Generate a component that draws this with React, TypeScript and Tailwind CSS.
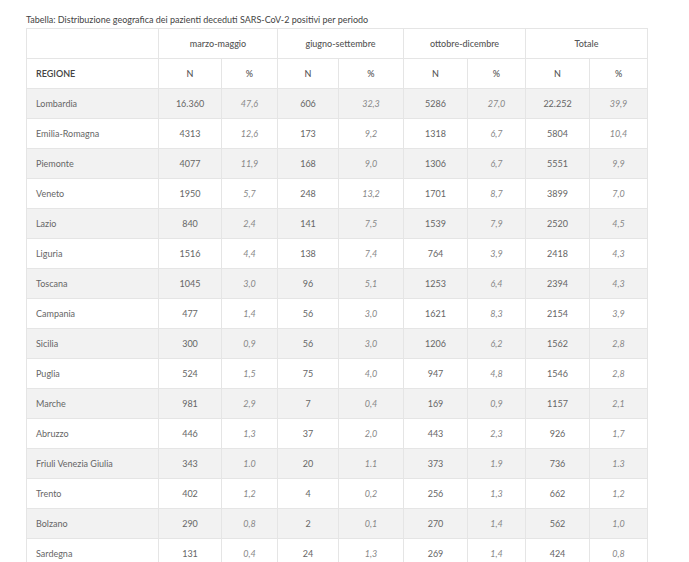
import { Fragment } from "react";

const ROWS: [string, string, string, string, string, string, string, string, string][] = [
  ["Lombardia", "16.360", "47,6", "606", "32,3", "5286", "27,0", "22.252", "39,9"],
  ["Emilia-Romagna", "4313", "12,6", "173", "9,2", "1318", "6,7", "5804", "10,4"],
  ["Piemonte", "4077", "11,9", "168", "9,0", "1306", "6,7", "5551", "9,9"],
  ["Veneto", "1950", "5,7", "248", "13,2", "1701", "8,7", "3899", "7,0"],
  ["Lazio", "840", "2,4", "141", "7,5", "1539", "7,9", "2520", "4,5"],
  ["Liguria", "1516", "4,4", "138", "7,4", "764", "3,9", "2418", "4,3"],
  ["Toscana", "1045", "3,0", "96", "5,1", "1253", "6,4", "2394", "4,3"],
  ["Campania", "477", "1,4", "56", "3,0", "1621", "8,3", "2154", "3,9"],
  ["Sicilia", "300", "0,9", "56", "3,0", "1206", "6,2", "1562", "2,8"],
  ["Puglia", "524", "1,5", "75", "4,0", "947", "4,8", "1546", "2,8"],
  ["Marche", "981", "2,9", "7", "0,4", "169", "0,9", "1157", "2,1"],
  ["Abruzzo", "446", "1,3", "37", "2,0", "443", "2,3", "926", "1,7"],
  ["Friuli Venezia Giulia", "343", "1.0", "20", "1.1", "373", "1.9", "736", "1.3"],
  ["Trento", "402", "1,2", "4", "0,2", "256", "1,3", "662", "1,2"],
  ["Bolzano", "290", "0,8", "2", "0,1", "270", "1,4", "562", "1,0"],
  ["Sardegna", "131", "0,4", "24", "1,3", "269", "1,4", "424", "0,8"],
];

const PERIODS = ["marzo-maggio", "giugno-settembre", "ottobre-dicembre", "Totale"];

export default function App() {
  return (
    <div className="min-h-screen bg-white pl-[26px] pt-[13px] font-['Lato','Open_Sans',sans-serif] text-[#666]">
      <p className="mb-[2px] h-[13px] text-[9px] leading-[13px] text-[#444]">
        Tabella: Distribuzione geografica dei pazienti deceduti SARS-CoV-2 positivi per periodo
      </p>
      <table className="w-[621px] table-fixed border-collapse text-[9px]">
        <colgroup>
          <col className="w-[132px]" />
          <col className="w-[63px]" />
          <col className="w-[56px]" />
          <col className="w-[61px]" />
          <col className="w-[65px]" />
          <col className="w-[64px]" />
          <col className="w-[58px]" />
          <col className="w-[64px]" />
          <col className="w-[58px]" />
        </colgroup>
        <thead>
          <tr className="h-[30px]">
            <th className="border border-[#e5e5e5]" />
            {PERIODS.map((p) => (
              <th key={p} colSpan={2} className="border border-[#e5e5e5] text-center font-medium text-[#555]">
                {p}
              </th>
            ))}
          </tr>
          <tr className="h-[30px]">
            <th className="border border-[#e5e5e5] pl-[9px] text-left font-semibold text-[#444]">REGIONE</th>
            {PERIODS.map((p) => (
              <Fragment key={p}>
                <th className="border border-[#e5e5e5] text-center font-medium text-[#555]">N</th>
                <th className="border border-[#e5e5e5] text-center font-medium text-[#555]">%</th>
              </Fragment>
            ))}
          </tr>
        </thead>
        <tbody>
          {ROWS.map((r, i) => (
            <tr key={r[0]} className={`h-[30px] ${i % 2 === 0 ? "bg-[#f2f2f2]" : "bg-white"}`}>
              <td className="border border-[#e5e5e5] pl-[9px] text-left">{r[0]}</td>
              {r.slice(1).map((v, j) => (
                <td
                  key={j}
                  className={`border border-[#e5e5e5] text-center ${j % 2 === 1 ? "italic text-[#888]" : ""}`}
                >
                  {v}
                </td>
              ))}
            </tr>
          ))}
        </tbody>
      </table>
    </div>
  );
}
